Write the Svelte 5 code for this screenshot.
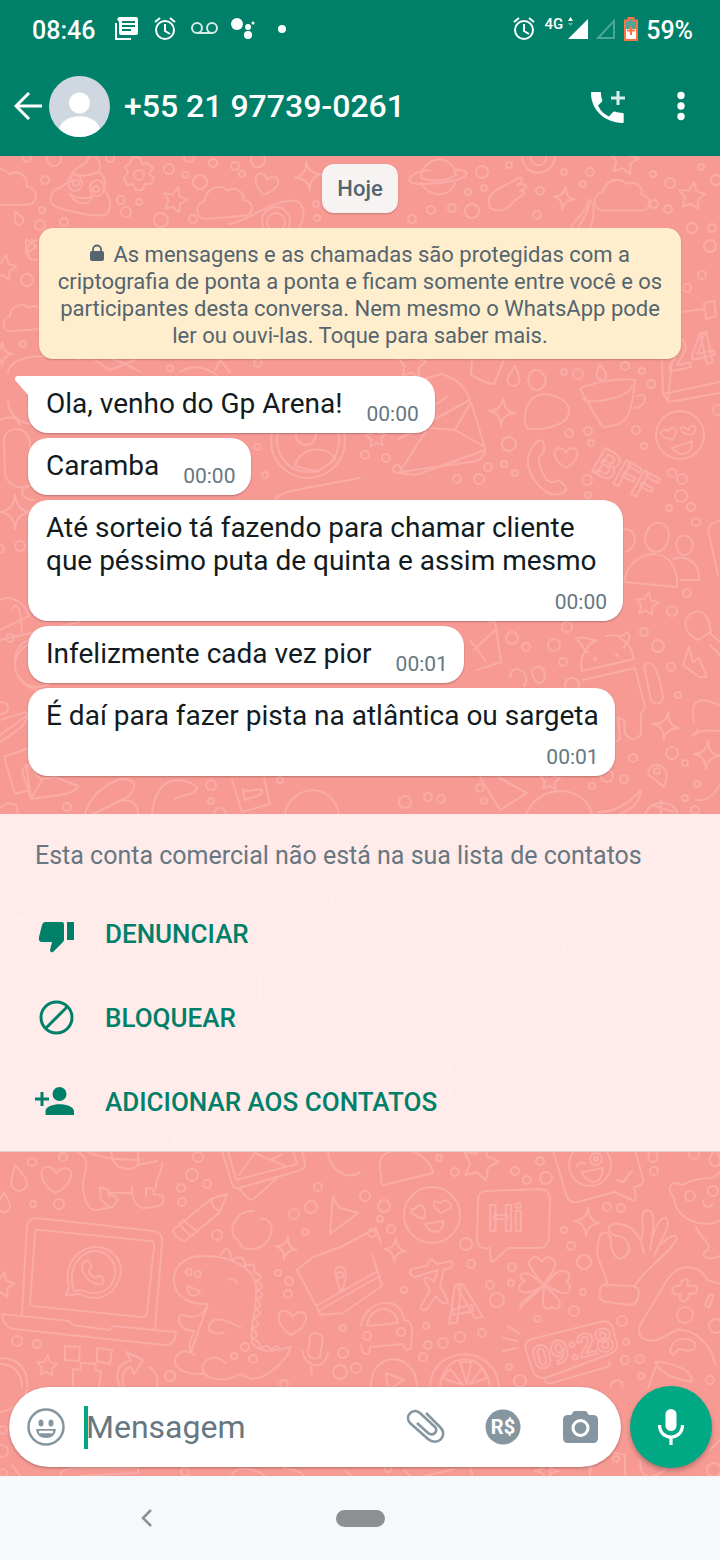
<script lang="ts">
  type Message = { text: string; time: string; stacked?: boolean };

  const messages: Message[] = [
    { text: 'Ola, venho do Gp Arena!', time: '00:00' },
    { text: 'Caramba', time: '00:00' },
    { text: 'Até sorteio tá fazendo para chamar cliente que péssimo puta de quinta e assim mesmo', time: '00:00', stacked: true },
    { text: 'Infelizmente cada vez pior', time: '00:01' },
    { text: 'É daí para fazer pista na atlântica ou sargeta', time: '00:01', stacked: true }
  ];

  let draft = $state('');

  // Wallpaper: small rings as [x, y, radius]
  const rings = [
    [27, 158, 4], [54, 159, 7], [110, 158, 4], [45, 180, 4], [42, 210, 3], [40, 225, 5], [64, 222, 4],
    [121, 200, 4], [139, 202, 3], [126, 212, 5], [169, 169, 5], [185, 175, 3], [200, 182, 7], [161, 220, 7],
    [193, 219, 4], [189, 157, 5], [213, 163, 4], [235, 166, 4], [242, 174, 3], [258, 160, 7], [316, 204, 3],
    [317, 218, 3], [27, 280, 6], [23, 344, 3], [170, 368, 3], [258, 363, 4],
    [482, 172, 6], [509, 165, 3], [468, 192, 3], [484, 188, 3], [431, 210, 4], [452, 208, 4], [472, 211, 7],
    [412, 219, 4], [540, 191, 4], [564, 172, 3], [590, 172, 4], [583, 184, 3], [537, 215, 4], [653, 174, 3],
    [670, 183, 5], [701, 167, 3], [716, 180, 5], [654, 204, 4], [668, 209, 4], [692, 228, 5], [712, 228, 4],
    [710, 246, 6], [702, 275, 4], [687, 288, 4], [564, 372, 3], [578, 374, 5], [625, 366, 4], [642, 371, 3],
    [651, 384, 4], [569, 433, 4], [588, 431, 4], [591, 443, 3], [636, 430, 4], [644, 446, 3], [509, 444, 7],
    [365, 455, 4], [386, 458, 4], [397, 469, 4], [488, 467, 4], [504, 464, 3], [672, 473, 4], [718, 410, 5],
    [457, 479, 4], [479, 479, 5], [515, 473, 3], [587, 480, 5], [588, 495, 3], [682, 479, 5], [681, 496, 6],
    [669, 508, 3], [691, 507, 4], [696, 522, 4], [687, 593, 4], [672, 611, 5], [644, 632, 4], [658, 646, 6],
    [512, 638, 6], [526, 647, 4], [554, 645, 6], [567, 627, 5], [563, 662, 4], [671, 667, 4], [572, 685, 7],
    [678, 695, 3], [672, 753, 6], [685, 763, 3], [633, 758, 4], [607, 776, 6], [624, 779, 4], [592, 786, 3],
    [697, 784, 3], [685, 798, 3], [695, 810, 4], [480, 788, 4], [484, 801, 3], [428, 797, 4], [441, 799, 4],
    [405, 802, 6], [20, 546, 5], [0, 549, 4], [257, 447, 3], [265, 475, 3], [10, 638, 4], [2, 708, 6],
    [211, 785, 5], [211, 801, 3], [67, 807, 4], [280, 780, 3], [220, 814, 6],
    [202, 834, 4], [257, 871, 5], [269, 918, 3], [276, 888, 4], [280, 972, 6], [162, 996, 5], [178, 996, 5],
    [133, 1040, 4], [90, 1052, 4], [109, 1068, 4], [303, 1042, 4], [322, 1018, 4], [104, 1128, 5], [33, 1124, 4],
    [280, 1136, 5], [388, 1010, 4], [452, 890, 4], [470, 905, 6], [520, 960, 5], [560, 1060, 4], [600, 1010, 6],
    [650, 930, 4], [688, 1000, 5], [640, 1120, 4], [500, 1130, 6],
    [32, 1162, 4], [63, 1157, 4], [33, 1204, 3], [59, 1204, 5], [198, 1157, 5], [192, 1175, 6], [207, 1184, 4],
    [181, 1188, 4], [182, 1202, 4], [217, 1235, 5], [318, 1187, 4], [311, 1207, 6], [294, 1214, 5], [305, 1232, 3],
    [278, 1273, 3], [289, 1281, 4], [288, 1294, 4], [17, 1341, 5], [37, 1344, 4], [245, 1347, 4], [234, 1356, 3],
    [253, 1359, 4], [170, 1376, 5], [343, 1328, 3], [343, 1353, 5], [340, 1372, 7], [356, 1368, 5], [284, 1384, 4],
    [439, 1158, 3], [455, 1172, 4], [515, 1171, 4], [540, 1161, 4], [527, 1180, 4], [546, 1178, 6], [654, 1171, 4],
    [694, 1154, 5], [365, 1196, 5], [384, 1206, 6], [380, 1219, 3], [372, 1233, 4], [391, 1229, 4], [466, 1244, 6],
    [471, 1264, 4], [512, 1267, 4], [511, 1283, 3], [490, 1285, 4], [497, 1300, 7], [404, 1290, 3], [564, 1230, 3],
    [571, 1246, 4], [584, 1262, 7], [607, 1207, 4], [621, 1208, 4], [583, 1292, 3], [574, 1311, 5], [537, 1319, 3],
    [622, 1321, 5], [685, 1315, 8], [716, 1326, 7], [626, 1342, 3], [640, 1359, 4], [625, 1360, 4], [641, 1376, 3],
    [710, 1380, 4], [426, 1326, 3], [482, 1333, 4], [460, 1337, 5], [443, 1343, 5], [428, 1345, 4], [423, 1357, 4],
    [509, 1367, 3], [520, 1381, 6], [3, 1430, 4], [2, 1451, 6], [3, 1473, 4], [185, 1472, 4], [388, 1469, 3],
    [616, 1459, 3], [714, 1470, 7]
  ];

  // Repeated doodles as [shape, x, y, scale, rotation]
  const shapes = {
    star: 'M0-11 3-4 10-3 5 2 6 9 0 6-6 9-5 2-10-3-3-4Z',
    sparkle: 'M0-13Q1-1 12 0Q1 1 0 13Q-1 1-12 0Q-1-1 0-13Z',
    heart: 'M0 11C-15 2-13-9-7-9-2-9 0-4 0-4S2-9 7-9C13-9 15 2 0 11Z',
    cloud: 'M-17 12C-26 10-24-2-16-3-14-13-3-17 4-10 12-14 18-6 16-1 25 0 25 11 17 12Z',
    drop: 'M0-10C3-4 6 0 6 4A6 6 0 0 1-6 4C-6 0-3-4 0-10Z'
  };
  type Doodle = [keyof typeof shapes, number, number, number, number];
  const doodles: Doodle[] = [
    ['cloud', 4, 188, 1.4, 0], ['star', 175, 200, 1.2, 15], ['cloud', 224, 203, 1.2, -5], ['heart', 266, 184, 1, 15],
    ['sparkle', 308, 176, 1.1, -8], ['drop', 18, 218, 0.7, -25], ['star', 4, 268, 1.2, 10], ['cloud', 26, 318, 1, -5],
    ['sparkle', 2, 354, 0.9, 0], ['star', 624, 160, 1.4, 10], ['sparkle', 564, 198, 0.9, 8], ['cloud', 622, 196, 1.2, 0],
    ['star', 692, 196, 1.3, 8], ['star', 412, 364, 1.4, 5], ['drop', 514, 376, 1, 8], ['drop', 601, 372, 0.8, -10],
    ['sparkle', 502, 412, 1.1, 5], ['star', 376, 437, 1, -5], ['heart', 566, 457, 1, 0], ['sparkle', 15, 512, 1.3, 0],
    ['star', 647, 604, 1.1, 8], ['sparkle', 666, 726, 1.1, 10], ['sparkle', 707, 755, 1.1, 5], ['star', 550, 780, 1, 5],
    ['sparkle', 56, 882, 1.1, 0], ['sparkle', 180, 912, 1, 0], ['sparkle', 116, 956, 1, 0], ['star', 199, 1130, 1, 0],
    ['heart', 236, 1078, 0.8, 0], ['cloud', 500, 850, 1.3, 0], ['star', 600, 880, 1.3, 0], ['heart', 560, 1000, 1.2, 0],
    ['cloud', 650, 1060, 1.4, 0], ['sparkle', 450, 1080, 1.1, 0], ['drop', 18, 1178, 1.3, -12], ['heart', 56, 1179, 1.3, 4],
    ['drop', 4, 1202, 1, 0], ['sparkle', 286, 1248, 0.9, 10], ['star', 2, 1285, 1.2, 10], ['heart', 292, 1322, 1.2, 5],
    ['star', 47, 1366, 1, 5], ['sparkle', 395, 1250, 0.9, 5], ['sparkle', 587, 1222, 1.1, 5], ['star', 480, 1162, 1.8, 15],
    ['drop', 653, 1154, 0.8, 0], ['drop', 715, 1157, 0.9, 0], ['sparkle', 547, 1471, 1, 0]
  ];

  const sketches = [
    // swirl with eyes, gear
    'M72 181C68 171 79 168 82 165 90 163 86 155 94 154 99 160 103 166 98 172 106 176 106 183 104 190 112 196 112 212 104 215 92 217 75 212 59 208 45 204 51 188 60 188 62 186 67 183 72 181ZM73 173C80 178 92 175 98 172M70 194C78 200 90 198 92 196 91 206 76 206 70 194',
    'M130 163 133 157 140 158 142 164 147 163 153 168 149 174 154 178 151 184 145 184 142 190 136 190 133 184 127 185 124 178 128 173 125 167Z',
    // avocado, planet, feather hand, banana
    'M230 224C255 217 267 204 287 201 305 198 307 215 299 227M430 170C408 172 402 184 420 184 442 184 470 180 466 172 463 169 458 170 454 170M421 178C436 183 449 180 456 175M421 183C430 198 450 198 455 183M421 178C422 155 453 153 456 175M490 208C484 190 503 188 515 180 525 173 523 182 517 185 525 183 532 186 520 191 530 191 521 196 514 201 510 207 502 214 490 208Z',
    'M571 227C580 213 588 211 588 200 596 201 594 220 590 228M578 228C585 215 589 211 589 205',
    'M522 157C524 178 552 178 555 157M530 157C533 168 546 168 546 157',
    'M26 253C34 251 34 246 37 246L26 239ZM37 240C30 242 26 247 28 255 29 260 36 261 37 259M32 240 36 248',
    // calendar, envelope, jar, cup, watch strap
    'M662 360 663 394 720 382M663 394 669 402 720 393M668 400 672 360M680 312 704 309M704 303 714 301 716 316 706 319ZM472 360 471 375Q490 385 494 384L504 360M580 389C592 409 601 427 604 427 625 425 632 420 635 380 620 377 590 383 580 389ZM583 399C587 406 632 397 632 386M637 396C650 391 646 408 634 408',
    'M398 439 429 426 400 472 470 462Q486 460 485 448L471 402 455 430 429 428M398 439 470 400Q464 381 442 374L420 380M432 407 447 397M455 430 485 447M400 473 416 475 485 450',
    'M530 402C535 390 562 392 569 408 571 424 550 430 528 429 522 422 525 408 530 402ZM528 380C531 362 546 371 546 382 541 393 530 393 528 380Z',
    // handset, letters frame
    'M528 465C525 448 546 428 544 450 543 458 536 454 540 466 543 477 550 487 558 480 567 486 568 489 564 492 548 501 532 482 528 465Z',
    'M8 373C9 362 22 356 48 356M8 400C8 430 60 440 62 380M0 420C8 415 18 417 20 425M4 440C5 425 30 424 30 445L31 485C24 491 8 486 5 475ZM27 485C18 492 22 499 34 500M12 610Q16 600 20 612L22 632M0 600C12 594 26 604 29 616L0 630',
    'M78 360C95 350 120 360 140 372M95 360 110 370 135 360M215 370 220 360 230 372M275 500C280 490 300 490 360 478M180 372Q200 360 220 378',
    'M295 466C300 445 330 445 335 460L317 472Z',
    // people, toothbrush, robot, quotes, bolt, bell, pin, tick, ball
    'M645 540C646 518 668 518 669 535 668 555 648 558 645 540ZM624 582C630 545 680 543 677 587ZM676 545C676 532 692 533 693 545 691 558 679 559 676 545ZM673 559C686 554 700 562 699 580L680 580M622 530C635 525 641 545 626 552M708 530C712 520 716 524 720 520M708 530 718 575',
    'M685 622C690 610 703 606 709 622L711 632 698 640Q686 635 685 622ZM709 632 720 642M710 645 720 655M689 647 683 665 699 677 707 677 699 658 693 662Z',
    'M582 671C578 655 590 642 597 640M582 671 634 659Q631 643 620 638M596 641C580 635 572 638 578 641 583 645 586 655 588 652M606 636C619 633 621 640 627 632 634 638 625 643 624 648M583 680 635 668 645 707 641 714 641 734Q634 744 625 734L624 720 618 718 620 738Q618 742 613 742M644 666C654 656 660 676 663 698 660 707 650 704 650 695Z',
    'M510 677C512 663 525 670 526 677 527 683 524 686 524 686M535 668C547 662 548 685 538 683 532 678 529 668 535 668ZM694 722C689 700 700 695 720 706M698 730 692 736C702 728 720 731 720 731M648 774C651 757 667 766 667 777L664 787ZM696 800C710 802 717 790 720 785M480 777 500 810 527 793 498 777M526 814C540 783 584 784 592 814M598 812C618 812 633 799 641 790 640 806 625 812 620 814M645 814C650 799 674 799 678 814M652 805 674 812M661 801V814',
    'M488 622 495 622 501 662 477 670M470 640 485 660M474 650 495 630',
    // magazine, mail cards, shoe, mouse, badge
    'M0 640 80 622M15 660C16 635 40 642 45 630M18 675C22 685 30 690 45 691M0 735 25 717M0 720 26 712C30 718 25 727 0 742M4 757 26 749M4 757 15 794 27 791M26 765 78 786Q77 792 60 795L31 799ZM26 765 22 770 31 799 42 780M28 764 40 779 55 777M0 808 8 803 16 805 18 813M85 814C90 795 105 785 120 779 135 779 138 785 130 795L122 800M93 814 122 800Q138 800 138 814M152 814C156 776 180 775 197 787 197 795 180 795 175 799M232 780 242 812 270 804 264 778M243 789C245 794 262 787 262 790 263 797 250 797 245 800ZM285 814C290 785 332 780 339 814',
    // items behind the sheet
    'M73 905C70 890 80 887 140 877M83 905 88 922 104 916M141 876 146 903M147 877C165 870 170 895 153 900M0 920 38 918M9 928 45 905 50 940 56 962 38 972 12 970ZM105 960C95 950 98 915 120 908 150 905 165 935 172 960 170 980 150 985 110 994 95 994 88 975 99 960M0 1020C8 1018 15 1010 20 1000M290 890C290 878 310 880 315 885 338 888 338 925 318 925 305 922 300 908 290 890ZM327 925 345 942M195 960C190 935 230 910 240 935 260 960 265 990 255 1020 240 1020 200 1020 195 960M245 960C260 958 265 990 260 1000M168 1080C170 1070 180 1060 193 1060 205 1046 228 1046 232 1060 245 1035 290 1035 305 1065M25 1075 75 1054 90 1086 68 1110Q50 1110 40 1125L30 1095ZM72 1120C72 1155 100 1160 140 1160M120 1140C120 1100 180 1100 175 1150M220 1135 290 1120 298 1150M128 1067 128 1055 149 1050 147 1064',
    'M400 890 450 875 470 920 420 935ZM500 930C520 910 560 920 565 950 550 975 510 970 500 930ZM590 940 650 925 660 970 600 985ZM380 1060C390 1030 430 1040 430 1070 415 1090 385 1085 380 1060ZM480 1040 530 1025 545 1070 495 1085ZM570 1100C590 1080 630 1085 640 1110M680 860 720 850M690 910C700 890 720 900 720 920M390 830C410 820 430 830 440 845M560 830 600 820',
    // dog legs, framed photo, laptop
    'M76 1151C95 1160 82 1175 83 1186 84 1200 88 1211 97 1210L112 1207C121 1200 116 1194 109 1196L109 1190 100 1187 101 1200 108 1206M108 1193 131 1193M132 1187C132 1200 136 1209 147 1208L158 1206C168 1201 164 1192 154 1195L153 1189 146 1188 146 1196M111 1152C113 1172 135 1172 138 1164M138 1152V1165L157 1161M162 1163C162 1175 154 1180 156 1189M222 1151 232 1184Q234 1189 239 1188L301 1170Q307 1168 304 1160L302 1151M228 1151 236 1180 297 1164 293 1151M239 1175 255 1153 285 1166M239 1188C249 1200 250 1203 257 1196L276 1179M271 1160 282 1154M328 1151C330 1175 352 1180 360 1172',
    'M22 1314 27 1226Q29 1218 37 1218L154 1231Q163 1233 162 1243L155 1329M30 1305 35 1233Q35 1229 40 1230L150 1241Q155 1242 154 1247L147 1313Q146 1318 140 1317L33 1306M2 1314 69 1321 73 1325 109 1330 114 1326 176 1332Q176 1345 164 1345L14 1329Q3 1327 2 1314Z',
    'M66 1295C68 1292 70 1288 68 1281 65 1257 86 1246 96 1247 114 1247 125 1264 119 1279 112 1300 92 1301 81 1294ZM73 1288C68 1268 79 1253 94 1251 110 1251 119 1266 114 1279 109 1294 92 1296 82 1290L74 1291ZM84 1262C88 1258 92 1264 91 1268 86 1271 91 1276 95 1278 100 1273 106 1279 103 1283 98 1287 88 1281 84 1274 82 1270 81 1265 84 1262Z',
    // pencil, apple, dinosaur
    'M173 1230 211 1199 227 1194 220 1212 185 1241Q175 1239 173 1230ZM211 1199 213 1206 220 1212M179 1222C182 1228 188 1236 194 1235M183 1220 198 1232M254 1211C240 1210 230 1222 233 1235 236 1240 240 1240 241 1246 247 1251 258 1250 266 1243 277 1228 270 1217 260 1219 258 1212 254 1211ZM259 1222C260 1217 264 1208 267 1211 267 1216 264 1220 262 1221',
    'M208 1304C190 1305 175 1297 174 1281 173 1266 186 1256 202 1256 230 1255 254 1268 256 1286 258 1310 249 1325 252 1343 263 1357 280 1348 291 1347 286 1361 267 1379 251 1379L240 1374C226 1383 204 1380 203 1370 201 1359 216 1353 225 1363M204 1374C180 1375 172 1365 176 1357 180 1350 188 1350 195 1355M191 1352C188 1343 191 1338 195 1331 183 1331 174 1321 181 1315 189 1316 201 1322 208 1304ZM187 1286C188 1300 199 1296 200 1291ZM228 1280Q233 1276 237 1283M241 1328C228 1320 211 1314 209 1327 208 1333 220 1335 224 1332M221 1255C226 1245 229 1247 232 1260 239 1255 245 1257 245 1266 254 1262 255 1265 254 1272 263 1276 262 1279 256 1281 264 1285 264 1288 257 1290 264 1294 264 1297 256 1299 262 1304 262 1307 255 1309 263 1313 261 1315 253 1318 261 1323 259 1326 252 1328 259 1335 258 1337 252 1338 260 1342 260 1345 261 1349 266 1344 269 1345 272 1351 276 1344 279 1345 280 1351',
    // gift, triangle, map, microphone
    'M333 1196Q338 1210 344 1209L358 1213 330 1234ZM297 1270 313 1257 341 1247 376 1228 381 1243M297 1270 321 1315 343 1313 382 1286 372 1254M316 1306 376 1272M318 1311 380 1276M341 1292C332 1270 335 1265 342 1267 348 1270 346 1281 341 1292ZM310 1340C308 1330 320 1332 323 1338L320 1357C315 1360 309 1359 308 1353ZM302 1350C305 1368 325 1372 328 1352M311 1367 312 1375',
    // laughing note, speech bubble, cat, ok hand
    'M381 1175C377 1160 382 1152 394 1151 396 1148 404 1148 412 1151 420 1153 433 1165 433 1173L384 1185Q380 1185 381 1175ZM553 1151 567 1197Q570 1203 577 1202L615 1192 634 1201Q637 1200 634 1187 645 1185 643 1178L635 1151M582 1172 603 1168C601 1190 585 1182 582 1172ZM617 1180 623 1182 632 1171M625 1181 629 1173M577 1166Q580 1160 586 1164',
    'M478 1203Q477 1191 487 1191L539 1189Q550 1189 550 1200L549 1237Q548 1248 539 1248L508 1248 493 1262Q490 1263 490 1248 477 1250 477 1239Z',
    'M674 1198C667 1190 669 1178 681 1185L684 1184C690 1181 700 1178 713 1178L720 1172M674 1198C675 1220 705 1230 720 1220M696 1227C703 1243 710 1240 708 1250 697 1255 708 1262 720 1256M703 1201C702 1206 712 1210 712 1204M607 1286C607 1270 594 1262 598 1243 600 1229 610 1230 611 1240 610 1250 616 1263 624 1257 634 1250 627 1236 617 1236 605 1233 606 1222 620 1224 633 1226 641 1236 644 1253M641 1239C646 1230 638 1212 647 1210 656 1209 654 1230 650 1250M653 1236C656 1225 663 1214 667 1219 671 1225 661 1240 654 1256M662 1244C668 1236 677 1233 677 1239 668 1256 646 1266 634 1287M600 1290Q602 1283 607 1285L633 1286Q639 1287 639 1293 637 1305 631 1305L606 1302C599 1300 599 1296 600 1290Z',
    // translate glyph sketch, clover, car
    'M411 1269 427 1266Q430 1254 436 1264L452 1261C455 1267 450 1269 444 1269L440 1286 448 1301C446 1305 441 1304 436 1296L427 1309C422 1313 419 1307 423 1303L430 1290 424 1280C424 1276 430 1277 434 1282L438 1270 415 1277Q408 1275 411 1269Z',
    'M544 1285C537 1277 525 1263 530 1260 535 1253 540 1259 542 1262 546 1254 555 1257 555 1265 554 1274 547 1277 544 1285 552 1279 554 1271 563 1271 573 1272 569 1280 566 1282 573 1285 570 1295 562 1293 555 1291 551 1287 544 1285 552 1292 559 1300 560 1303 560 1311 553 1308 551 1307 545 1312 543 1306 543 1300ZM544 1285C536 1279 526 1269 521 1275 519 1279 524 1280 525 1281 519 1283 517 1290 522 1292 531 1294 537 1289 544 1285L520 1308 521 1303Z',
    'M361 1326C364 1300 401 1293 404 1320 410 1320 413 1327 412 1332L411 1348Q405 1353 403 1344L370 1347 369 1354Q362 1355 361 1345M367 1326C370 1304 395 1304 398 1323Z',
    // orange, clock radio, gamepad, drink
    'M430 1387C431 1344 496 1343 499 1387M440 1387C443 1350 486 1350 490 1387M460 1362 471 1362 467 1384ZM450 1369 463 1385 442 1378ZM482 1368 470 1384 487 1378ZM526 1350Q523 1342 532 1339L600 1322Q610 1319 613 1329L617 1344Q617 1351 610 1354L548 1377Q538 1380 533 1372ZM545 1378Q544 1384 552 1383L607 1367Q612 1364 609 1362M508 1326 520 1334M503 1338 517 1341M503 1351 516 1348M640 1325C635 1340 650 1342 657 1340L675 1331C686 1326 710 1338 715 1364M640 1325 667 1280C680 1261 700 1265 707 1280L720 1284M675 1286 680 1286Q681 1278 688 1280L687 1286C697 1284 699 1288 696 1293L689 1294Q687 1304 680 1300L680 1294C671 1296 671 1289 675 1286ZM705 1305 710 1294 714 1295 709 1308ZM655 1362C670 1362 695 1370 691 1382 680 1380 659 1374 655 1362ZM656 1366 648 1388M670 1352C672 1335 690 1337 695 1343 697 1350 690 1352 685 1350 672 1346 677 1360 670 1352',
    // play disc, timer, windows, around the composer
    'M371 1387C370 1350 416 1350 417 1387M386 1373 404 1380 388 1390ZM0 1358C20 1358 28 1370 27 1387M0 1364C14 1364 22 1374 22 1387M65 1346 80 1347 79 1361 65 1360ZM97 1348 112 1350 110 1364 97 1361ZM81 1363 96 1364 95 1370 101 1371 99 1387M73 1387 73 1369 80 1370 81 1363M120 1387C113 1372 120 1362 131 1361L126 1352 143 1360 134 1374 131 1367C124 1369 120 1375 124 1387M149 1367Q160 1373 157 1387M610 1387C614 1376 625 1380 622 1387M0 1412C15 1410 25 1400 27 1390M60 1475C62 1465 80 1468 138 1468L138 1473 80 1476M232 1475C235 1465 255 1468 265 1476M283 1468C300 1470 305 1475 302 1476M404 1470 410 1476M425 1476 454 1469M470 1467 473 1476M590 1476C590 1456 605 1448 625 1455L625 1476M640 1460C640 1480 650 1480 665 1470M710 1450 720 1440M12 1465 20 1476M345 1470 352 1476'
  ];
</script>

<div class="phone">
  <header>
    <div class="status">
      <span class="clock">08:46</span>
      <div class="notices">
        <svg viewBox="0 0 27 24" aria-hidden="true"><path d="M3 6v16h15" fill="none" stroke="#fff" stroke-width="2" /><path d="M6 0H23Q25 0 25 2V16Q25 18 23 18H8Q6 18 6 16V5L4 2Z" fill="#fff" /><path d="M9 5h13M9 9h13M9 13h9" stroke="#008069" stroke-width="2" /></svg>
        <svg viewBox="0 0 27 24" aria-hidden="true"><g fill="none" stroke="#fff" stroke-width="2"><circle cx="13" cy="13" r="9" /><path d="M13 7v7l5 3M3 5l5-4M18 1l5 4" /></g></svg>
        <svg viewBox="0 0 27 24" aria-hidden="true"><g fill="none" stroke="#d5ebe6" stroke-width="2"><circle cx="6" cy="11" r="5" /><circle cx="21" cy="11" r="5" /><path d="M6 16h15" /></g></svg>
        <svg viewBox="0 0 27 24" aria-hidden="true"><g fill="#fff"><circle cx="7" cy="7" r="6" /><circle cx="18" cy="10" r="3" /><circle cx="18" cy="18" r="4" /><circle cx="23" cy="6" r="1.5" /></g></svg>
        <svg viewBox="0 0 27 24" aria-hidden="true"><circle cx="13" cy="12" r="4" fill="#fff" /></svg>
      </div>
      <div class="system">
        <svg class="alarm" viewBox="0 0 27 24" aria-hidden="true"><g fill="none" stroke="#fff" stroke-width="2"><circle cx="13" cy="13" r="9" /><path d="M13 7v7l5 3M3 5l5-4M18 1l5 4" /></g></svg>
        <span class="network">4G</span>
        <svg class="signal" viewBox="0 0 22 24" aria-hidden="true"><path d="M22 2V22H2Z" fill="#fff" /><path d="M2 4 4.500 0 7 4Z" fill="#fff" /><path d="M2 6h5L4.500 9Z" fill="#66b3a5" /></svg>
        <svg class="signal" viewBox="0 0 22 24" aria-hidden="true"><path d="M20 4V21H4Z" fill="none" stroke="#4da696" stroke-width="2" /></svg>
        <svg class="battery" viewBox="0 0 14 24" aria-hidden="true"><path d="M1 3h3V1h6v2h3v20H1Z" fill="#4da696" /><path d="M1 12h12v11H1Z" fill="#fff" /><path d="M1 3.500h3.500V1h5v2.500H13V23H1Z" fill="none" stroke="#ff7043" stroke-width="2" /><path d="M7 9v9M3 13.500h8" stroke="#ff7043" stroke-width="2" /></svg>
        <span class="percent">59%</span>
      </div>
    </div>
    <div class="appbar">
      <button class="back" aria-label="Voltar">
        <svg viewBox="0 0 28 28" aria-hidden="true"><path d="M28 14H2M15 1 2 14 15 27" fill="none" stroke="#fff" stroke-width="3" /></svg>
      </button>
      <svg class="avatar" viewBox="0 0 61 61" aria-hidden="true">
        <clipPath id="face"><circle cx="30.500" cy="30.500" r="30.500" /></clipPath>
        <g clip-path="url(#face)"><path d="M0 0h61v61H0Z" fill="#cfd8e0" /><circle cx="30.500" cy="27" r="10.500" fill="#fff" /><path d="M10 53C14 36 47 36 51 53L46 61H14Z" fill="#fff" /></g>
      </svg>
      <h1>+55 21 97739-0261</h1>
      <button class="call" aria-label="Adicionar ligação">
        <svg viewBox="0 0 36 36" aria-hidden="true"><path d="M2 4h8q1 0 1 1c0 3 .5 5 1.200 7q.4 1-.3 1.700L8 17.500c3 6 6 8.500 11 11l4-4.500q.7-.7 1.700-.4c3 1 5 1.300 8 1.300q1 0 1 1v8q0 1-1 1C15 35 1 22 1 5q0-1 1-1Z" fill="#fff" /><path d="M28 3v14M21 10h14" stroke="#d9eeea" stroke-width="3" /></svg>
      </button>
      <button class="more" aria-label="Mais opções">
        <svg viewBox="0 0 8 30" aria-hidden="true"><g fill="#fff"><circle cx="4" cy="4.500" r="3.700" /><circle cx="4" cy="15" r="3.700" /><circle cx="4" cy="25.500" r="3.700" /></g></svg>
      </button>
    </div>
  </header>

  <main>
    <svg class="wallpaper" viewBox="0 156 720 1320" preserveAspectRatio="xMidYMin slice" aria-hidden="true">
      {#each rings as [x, y, r]}
        <circle cx={x} cy={y} {r} />
      {/each}
      {#each doodles as [shape, x, y, scale, turn]}
        <path d={shapes[shape]} transform="translate({x} {y}) rotate({turn}) scale({scale})" />
      {/each}
      {#each sketches as d}
        <path {d} />
      {/each}
      <circle cx="139" cy="175" r="5" /><ellipse cx="75" cy="183" rx="7" ry="8" /><ellipse cx="97" cy="188" rx="7" ry="8" />
      <circle cx="76" cy="183" r="3" /><circle cx="96" cy="189" r="3" />
      <circle cx="276" cy="221" r="14" /><circle cx="276" cy="222" r="9" />
      <circle cx="308" cy="441" r="37" /><circle cx="308" cy="441" r="31" /><circle cx="306" cy="435" r="10" />
      <circle cx="680" cy="435" r="24" /><path d="M664 437C655 431 665 428 668 431 674 424 680 430 672 440ZM684 433C675 424 687 427 688 430 692 422 698 426 694 433 693 437 684 433 684 433ZM672 448 692 441C693 456 678 457 672 448" />
      <circle cx="595" cy="659" r="1" /><circle cx="617" cy="655" r="1" />
      <circle cx="37" cy="665" r="22" /><circle cx="657" cy="771" r="3" />
      <circle cx="432" cy="1215" r="28" /><path d="M424 1219C410 1215 407 1208 415 1209 417 1203 428 1203 424 1219ZM441 1213C430 1205 433 1198 440 1203 445 1197 454 1204 450 1208ZM425 1224 443 1221C445 1233 430 1236 425 1224Z" />
      <circle cx="590" cy="1165" r="21" /><circle cx="596" cy="1159" r="6" /><circle cx="596" cy="1159" r="2" />
      <circle cx="690" cy="1196" r="5" /><circle cx="713" cy="1191" r="5" />
      <circle cx="189" cy="1272" r="3" /><circle cx="198" cy="1274" r="3" /><circle cx="340" cy="1275" r="3" />
      <circle cx="367" cy="1336" r="4" /><circle cx="401" cy="1332" r="4" />
      <circle cx="570" cy="1472" r="20" /><circle cx="230" cy="888" r="15" /><circle cx="318" cy="900" r="14" /><circle cx="192" cy="871" r="17" />
      <circle cx="322" cy="979" r="7" /><circle cx="215" cy="950" r="16" />
      <text x="488" y="1231" font-size="36">Hi</text>
      <text x="449" y="1324" font-size="52" transform="rotate(-12 449 1324)">A</text>
      <text x="536" y="1370" font-size="32" transform="rotate(-15 536 1370)">09:28</text>
      <text x="668" y="372" font-size="44" transform="rotate(-12 668 372)">24</text>
      <text x="590" y="470" font-size="38" transform="rotate(30 590 470)">BFF</text>
    </svg>

    <div class="conversation">
      <div class="day">Hoje</div>
      <button class="encryption">
        <svg viewBox="0 0 14 18" aria-hidden="true"><path d="M3 8V5.500a4 4 0 0 1 8 0V8" fill="none" stroke="#54656f" stroke-width="1.800" /><rect x="0" y="7" width="14" height="10" rx="2" fill="#54656f" /></svg>
        As mensagens e as chamadas são protegidas com a criptografia de ponta a ponta e ficam somente entre você e os participantes desta conversa. Nem mesmo o WhatsApp pode ler ou ouvi-las. Toque para saber mais.
      </button>
      <ul class="messages">
        {#each messages as message, i (i)}
          <li class="bubble" class:stacked={message.stacked} class:first={i === 0}>
            <p>{message.text}</p>
            <time>{message.time}</time>
          </li>
        {/each}
      </ul>
    </div>

    <section class="sheet">
      <p>Esta conta comercial não está na sua lista de contatos</p>
      <button>
        <svg viewBox="0 0 40 40" aria-hidden="true"><path d="M10 8H27Q29 8 29 11V26Q29 27 28 28L18 38Q15 39 15 36L17 28H7Q3 28 4 23L7 11Q8 8 10 8ZM32 8h7v18h-7Z" fill="#008069" /></svg>
        DENUNCIAR
      </button>
      <button>
        <svg viewBox="0 0 40 40" aria-hidden="true"><g fill="none" stroke="#008069" stroke-width="3"><circle cx="21.500" cy="19.500" r="15.500" /><path d="M11 30 32 9" /></g></svg>
        BLOQUEAR
      </button>
      <button>
        <svg viewBox="0 0 40 40" aria-hidden="true"><path d="M7 10v14M0 17h14" stroke="#008069" stroke-width="3" /><circle cx="24.500" cy="12" r="7" fill="#008069" /><path d="M10.500 33V29C11 20 38 20 39 29V33Z" fill="#008069" /></svg>
        ADICIONAR AOS CONTATOS
      </button>
    </section>

    <form class="composer" onsubmit={(e) => e.preventDefault()}>
      <div class="field">
        <button type="button" aria-label="Emoji">
          <svg viewBox="0 0 40 40" aria-hidden="true"><g fill="#8696a0"><circle cx="20" cy="20" r="17.500" fill="none" stroke="#8696a0" stroke-width="2.500" /><ellipse cx="15" cy="16" rx="2.500" ry="3.500" /><ellipse cx="25" cy="16" rx="2.500" ry="3.500" /><path d="M10 22H30Q29 31 20 31T10 22Z" /></g><path d="M13 25H27" stroke="#fff" stroke-width="2.500" /></svg>
        </button>
        <label class="entry">
          <span class="caret"></span>
          <input type="text" bind:value={draft} placeholder="Mensagem" aria-label="Mensagem" />
        </label>
        <button type="button" aria-label="Anexar">
          <svg viewBox="0 0 40 40" aria-hidden="true"><path d="M20 6 34 20C43 29 31 40 22 32L4 16C-2 9 7 0 14 6L29 20C33 24 27 30 22 26L11 16" fill="none" stroke="#8696a0" stroke-width="2.600" /></svg>
        </button>
        <button type="button" aria-label="Pagamento">
          <svg viewBox="0 0 40 40" aria-hidden="true"><circle cx="20" cy="20" r="17.500" fill="#8696a0" /><text x="20" y="27" text-anchor="middle" font-size="20" font-weight="700" fill="#fff">R$</text></svg>
        </button>
        <button type="button" aria-label="Câmera">
          <svg viewBox="0 0 40 40" aria-hidden="true"><path d="M14 4H26L29 8H33Q38 8 38 13V31Q38 36 33 36H8Q3 36 3 31V13Q3 8 8 8H11Z" fill="#8696a0" /><circle cx="20.500" cy="21" r="7.500" fill="none" stroke="#fff" stroke-width="3" /></svg>
        </button>
      </div>
      <button type="button" class="mic" aria-label="Gravar áudio">
        <svg viewBox="0 0 28 36" aria-hidden="true"><rect x="8.500" y="0" width="11" height="22" rx="5.500" fill="#fff" /><path d="M2.500 16C2.500 32 25.500 32 25.500 16M14 28v8" fill="none" stroke="#fff" stroke-width="3.200" /></svg>
      </button>
    </form>
  </main>

  <nav>
    <button aria-label="Voltar ao app anterior">
      <svg viewBox="0 0 12 18" aria-hidden="true"><path d="M10 1 2 9l8 8" fill="none" stroke="#8d8f91" stroke-width="2.500" /></svg>
    </button>
    <button class="home" aria-label="Início"></button>
  </nav>
</div>

<style>
  :global(body) {
    margin: 0;
  }

  .phone {
    display: flex;
    flex-direction: column;
    min-height: 100vh;
    font-family: Roboto, sans-serif;
    color: #111b21;
  }

  button {
    display: flex;
    align-items: center;
    justify-content: center;
    padding: 0;
    border: 0;
    background: none;
    font: inherit;
    color: inherit;
    cursor: pointer;
  }

  svg {
    display: block;
    flex: none;
  }

  p,
  h1 {
    margin: 0;
  }

  header {
    background: #008069;
    color: #fff;
  }

  .status {
    display: flex;
    align-items: center;
    height: 56px;
    padding: 4px 27px 0 32px;
    box-sizing: border-box;
    font-size: 25px;
    font-weight: 500;
  }

  .notices {
    display: flex;
    gap: 12px;
    margin: 0 0 2px 18px;
  }

  .notices svg,
  .alarm {
    width: 27px;
    height: 24px;
  }

  .system {
    display: flex;
    align-items: center;
    margin-left: auto;
  }

  .network {
    align-self: flex-start;
    margin-left: 6px;
    font-size: 15px;
    line-height: 16px;
  }

  .system svg {
    margin-bottom: 2px;
  }

  .signal {
    width: 22px;
    height: 24px;
    margin-left: 3px;
  }

  .signal + .signal {
    margin-left: 6px;
  }

  .battery {
    width: 14px;
    height: 24px;
    margin: 0 8px;
  }

  .appbar {
    display: flex;
    align-items: center;
    height: 100px;
    padding: 0 35px 0 14px;
    box-sizing: border-box;
  }

  .back svg {
    width: 28px;
    height: 28px;
  }

  .avatar {
    width: 61px;
    height: 61px;
    margin: 0 14px 0 7px;
  }

  h1 {
    flex: 1;
    font-size: 32px;
    font-weight: 500;
  }

  .call svg {
    width: 36px;
    height: 36px;
  }

  .more {
    margin-left: 51px;
  }

  .more svg {
    width: 8px;
    height: 30px;
  }

  main {
    position: relative;
    display: flex;
    flex: 1;
    flex-direction: column;
    background: #f79a94;
    overflow: hidden;
  }

  /* Doodles sit behind everything in the chat */
  .wallpaper {
    position: absolute;
    inset: 0;
    width: 100%;
    height: 100%;
    fill: none;
    stroke: #faaca7;
    stroke-width: 2;
    stroke-linejoin: round;
    stroke-linecap: round;
  }

  .wallpaper path {
    vector-effect: non-scaling-stroke;
  }

  .wallpaper text {
    font-weight: 700;
  }

  .conversation,
  .sheet,
  .composer {
    position: relative;
  }

  .conversation {
    display: flex;
    flex-direction: column;
    align-items: center;
    padding: 8px 39px 38px 28px;
  }

  .day {
    margin-right: -11px;
    padding: 0 15px;
    border-radius: 12px;
    background: #f7f3f3;
    box-shadow: 0 1px 2px rgba(0, 0, 0, 0.2);
    color: #54656f;
    font-size: 22px;
    font-weight: 500;
    line-height: 49px;
  }

  .encryption {
    display: block;
    align-self: stretch;
    margin: 15px 0 17px 11px;
    padding: 13px 14px 10px;
    border-radius: 14px;
    background: #ffeecd;
    box-shadow: 0 1px 2px rgba(0, 0, 0, 0.2);
    color: #54656f;
    font-size: 22px;
    line-height: 27px;
    text-align: center;
  }

  .encryption svg {
    display: inline-block;
    width: 14px;
    height: 18px;
    margin-right: 4px;
  }

  .messages {
    display: flex;
    flex-direction: column;
    align-items: flex-start;
    align-self: stretch;
    gap: 5px;
    margin: 0;
    padding: 0;
    list-style: none;
  }

  .bubble {
    position: relative;
    display: flex;
    align-items: flex-end;
    gap: 24px;
    max-width: 595px;
    padding: 11px 16px 6px 18px;
    box-sizing: border-box;
    border-radius: 20px;
    background: #fff;
    box-shadow: 0 1px 2px rgba(0, 0, 0, 0.25);
  }

  .bubble p {
    padding-bottom: 7px;
    font-size: 28px;
    line-height: 33px;
  }

  .bubble time {
    color: #667781;
    font-size: 21px;
    line-height: 26px;
  }

  .bubble.stacked {
    flex-direction: column;
    gap: 5px;
  }

  .bubble.first {
    border-top-left-radius: 0;
  }

  .bubble.first::before {
    content: '';
    position: absolute;
    top: 0;
    left: -13px;
    width: 14px;
    height: 20px;
    border-top-left-radius: 3px;
    background: #fff;
    clip-path: polygon(0 0, 100% 0, 100% 100%, 0 20%);
  }

  .sheet {
    padding: 21px 35px 7px;
    border-bottom: 1px solid #e0d0cf;
    background: rgba(255, 255, 255, 0.8);
  }

  .sheet p {
    margin-bottom: 15px;
    color: #667781;
    font-size: 25px;
    line-height: 42px;
  }

  .sheet button {
    justify-content: flex-start;
    gap: 30px;
    width: 100%;
    height: 84px;
    color: #008069;
    font-size: 26px;
    font-weight: 500;
  }

  .sheet svg {
    width: 40px;
    height: 40px;
  }

  .composer {
    display: flex;
    align-items: center;
    gap: 9px;
    margin-top: auto;
    padding: 0 8px 8px 9px;
  }

  .field {
    display: flex;
    flex: 1;
    align-items: center;
    min-width: 0;
    height: 80px;
    padding: 0 21px 0 17px;
    box-sizing: border-box;
    border-radius: 40px;
    background: #fff;
    box-shadow: 0 1px 3px rgba(0, 0, 0, 0.3);
  }

  .field svg {
    width: 40px;
    height: 40px;
  }

  .field button + button {
    margin-left: 37px;
  }

  .entry {
    position: relative;
    flex: 1;
    min-width: 0;
    margin: 0 20px;
  }

  .caret {
    position: absolute;
    top: 0;
    left: -2px;
    width: 4px;
    height: 43px;
    background: #00a884;
  }

  input {
    display: block;
    width: 100%;
    height: 43px;
    padding: 0;
    border: 0;
    outline: 0;
    background: none;
    font: inherit;
    font-size: 32px;
    caret-color: #00a884;
  }

  input::placeholder {
    color: #667781;
    opacity: 1;
  }

  .mic {
    flex: none;
    width: 82px;
    height: 82px;
    border-radius: 50%;
    background: #00a884;
    box-shadow: 0 3px 5px rgba(0, 0, 0, 0.25);
  }

  .mic svg {
    width: 28px;
    height: 36px;
  }

  nav {
    display: grid;
    grid-template-columns: 1fr auto 1fr;
    align-items: center;
    height: 84px;
    background: #f6f8fa;
  }

  nav svg {
    width: 12px;
    height: 18px;
  }

  nav button:first-child {
    justify-self: center;
    margin-right: 41px;
  }

  .home {
    width: 49px;
    height: 17px;
    border-radius: 9px;
    background: #8d8f91;
  }
</style>
